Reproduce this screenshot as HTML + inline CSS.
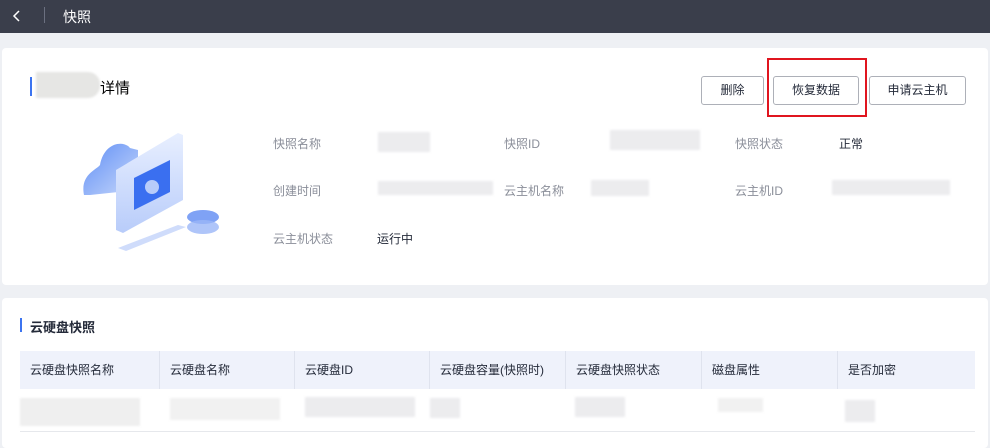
<!DOCTYPE html>
<html><head><meta charset="utf-8"><style>
*{margin:0;padding:0;box-sizing:border-box}
body{width:990px;height:442px;overflow:hidden;background:#eef0f4;font-family:"Liberation Sans","Noto Sans CJK SC",sans-serif;position:relative}
.top{position:absolute;left:0;top:0;width:990px;height:33px;background:#3a3e4b;color:#fff}
.card{position:absolute;background:#fff;border-radius:4px}
.abs{position:absolute}
.lbl{position:absolute;font-size:12px;color:#8a8e99}
.val{position:absolute;font-size:12px;color:#252b3a}
.btn{position:absolute;top:76px;height:29px;border:1px solid #adb0b8;border-radius:3px;font-size:12px;color:#252b3a;text-align:center;line-height:27px;background:#fff}
.blur{position:absolute;background:#ececee;filter:blur(1px)}
.th{position:absolute;top:351px;height:38px;line-height:38px;font-size:12px;color:#252b3a;padding-left:10px;border-right:1px solid #dfe3ee}
</style></head><body>
<div class="top">
<svg class="abs" style="left:12px;top:9px" width="10" height="14"><path d="M7 2 L2 7 L7 12" stroke="#fff" stroke-width="1.5" fill="none"/></svg>
<div class="abs" style="left:44px;top:7px;width:1px;height:16px;background:#6b7080"></div>
<div class="abs" style="left:63px;top:7px;font-size:14px">快照</div>
</div>
<div class="card" style="left:2px;top:48px;width:986px;height:237px"></div>
<div class="abs" style="left:30px;top:77px;width:2px;height:19px;background:#3c74f0"></div>
<div class="blur" style="left:36px;top:72px;width:64px;height:26px;background:#e6e6e4;border-radius:0 12px 12px 0"></div>
<div class="abs" style="left:100px;top:77px;font-size:15px;color:#000">详情</div>
<div class="btn" style="left:701px;width:63px">删除</div>
<div class="btn" style="left:773px;width:86px">恢复数据</div>
<div class="btn" style="left:869px;width:97px">申请云主机</div>
<div class="abs" style="left:767px;top:58px;width:100px;height:59px;border:2px solid #e0151f"></div>
<svg class="abs" style="left:78px;top:130px" width="150" height="125">
<defs><linearGradient id="g" x1="0" y1="0" x2="1" y2="1"><stop offset="0" stop-color="#5f8ef5"/><stop offset="1" stop-color="#c8d8fb"/></linearGradient>
<linearGradient id="g2" x1="0" y1="0" x2="0" y2="1"><stop offset="0" stop-color="#e8efff"/><stop offset="1" stop-color="#b8ccfa"/></linearGradient></defs>
<path d="M6 65 C2 45 18 40 22 35 C26 12 46 10 52 18 L60 20 L60 60 L12 65 Z" fill="url(#g)"/>
<path d="M38 40 L100 3 L105 5 L105 70 L45 103 L38 100 Z" fill="url(#g2)"/>
<path d="M56 48 L92 30 L92 62 L56 80 Z" fill="#3a6ff0"/>
<circle cx="74" cy="57" r="7" fill="#b8ccfa"/>
<ellipse cx="125" cy="87" rx="16" ry="7" fill="#7fa2f5"/>
<ellipse cx="125" cy="97" rx="16" ry="7" fill="#9bb6f7" opacity=".8"/>
<path d="M40 118 L100 95 L108 97 L48 121 Z" fill="#cfdcfb"/>
</svg>
<div class="lbl" style="left:273px;top:135px">快照名称</div>
<div class="lbl" style="left:273px;top:182px">创建时间</div>
<div class="lbl" style="left:273px;top:230px">云主机状态</div>
<div class="lbl" style="left:504px;top:135px">快照ID</div>
<div class="lbl" style="left:504px;top:182px">云主机名称</div>
<div class="lbl" style="left:735px;top:135px">快照状态</div>
<div class="lbl" style="left:735px;top:182px">云主机ID</div>
<div class="val" style="left:839px;top:135px">正常</div>
<div class="val" style="left:377px;top:230px">运行中</div>
<div class="blur" style="left:378px;top:132px;width:52px;height:20px"></div>
<div class="blur" style="left:610px;top:130px;width:90px;height:20px"></div>
<div class="blur" style="left:378px;top:181px;width:115px;height:14px"></div>
<div class="blur" style="left:591px;top:180px;width:58px;height:16px"></div>
<div class="blur" style="left:832px;top:180px;width:118px;height:15px"></div>
<div class="card" style="left:2px;top:298px;width:986px;height:150px"></div>
<div class="abs" style="left:20px;top:318px;width:2px;height:14px;background:#3c74f0"></div>
<div class="abs" style="left:30px;top:317px;font-size:13px;font-weight:bold;color:#252b3a">云硬盘快照</div>
<div class="abs" style="left:20px;top:351px;width:955px;height:38px;background:#eff2fb"></div>
<div class="th" style="left:20px;width:140px">云硬盘快照名称</div>
<div class="th" style="left:160px;width:135px">云硬盘名称</div>
<div class="th" style="left:295px;width:135px">云硬盘ID</div>
<div class="th" style="left:430px;width:136px">云硬盘容量(快照时)</div>
<div class="th" style="left:566px;width:136px">云硬盘快照状态</div>
<div class="th" style="left:702px;width:136px">磁盘属性</div>
<div class="th" style="left:838px;width:137px;border:none">是否加密</div>
<div class="blur" style="left:20px;top:398px;width:120px;height:28px;background:#efefef"></div>
<div class="blur" style="left:170px;top:398px;width:110px;height:22px;background:#f1f1f1"></div>
<div class="blur" style="left:305px;top:397px;width:110px;height:20px"></div>
<div class="blur" style="left:430px;top:398px;width:30px;height:20px"></div>
<div class="blur" style="left:575px;top:397px;width:50px;height:20px"></div>
<div class="blur" style="left:718px;top:398px;width:45px;height:14px;background:#f1f1f1"></div>
<div class="blur" style="left:845px;top:400px;width:30px;height:22px"></div>
<div class="abs" style="left:20px;top:431px;width:955px;height:1px;background:#e6e8ec"></div>
</body></html>
